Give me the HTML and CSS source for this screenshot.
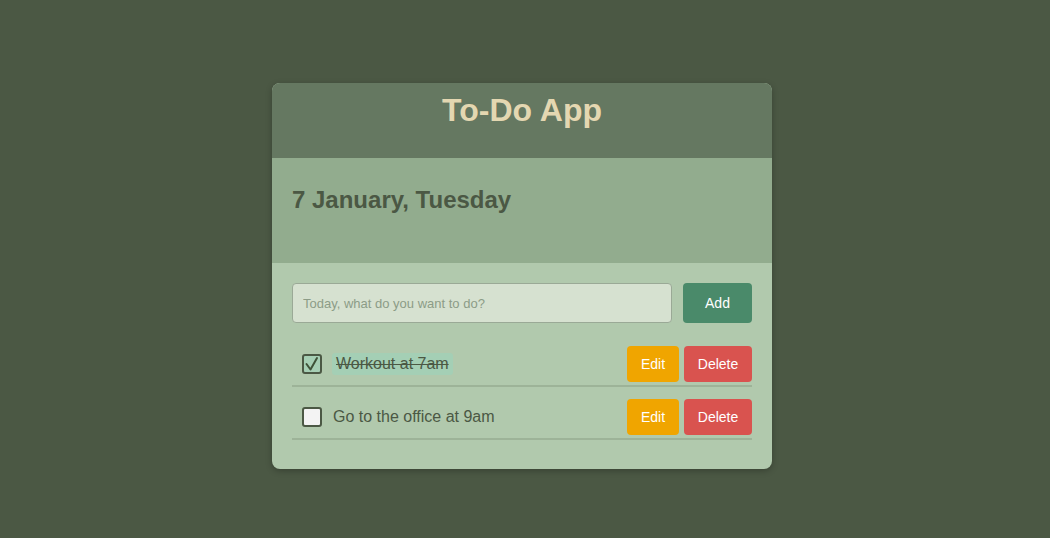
FILE: index.html
```html
<!DOCTYPE html>
<html lang="en">
<head>
<meta charset="utf-8">
<title>To-Do App</title>
<link rel="stylesheet" href="styles.css">
</head>
<body>
<div class="app">
  <header class="app-header">
    <h1 class="title">To-Do App</h1>
  </header>
  <section class="date-bar">
    <h2 class="date">7 January, Tuesday</h2>
  </section>
  <main class="content">
    <form class="add-form">
      <input class="task-input" type="text" placeholder="Today, what do you want to do?">
      <button class="btn btn-add" type="button">Add</button>
    </form>
    <ul class="task-list">
      <li class="task">
        <span class="check checked"><svg viewBox="0 0 16 16" width="16" height="16"><polyline points="2.5,8 6.5,13.5 13,2" fill="none" stroke="#3f5238" stroke-width="2" stroke-linecap="round" stroke-linejoin="round"/></svg></span>
        <span class="task-text done">Workout at 7am</span>
        <span class="actions">
          <button class="btn btn-edit" type="button">Edit</button>
          <button class="btn btn-delete" type="button">Delete</button>
        </span>
      </li>
      <li class="task">
        <span class="check"></span>
        <span class="task-text">Go to the office at 9am</span>
        <span class="actions">
          <button class="btn btn-edit" type="button">Edit</button>
          <button class="btn btn-delete" type="button">Delete</button>
        </span>
      </li>
    </ul>
  </main>
</div>
</body>
</html>
```
FILE: styles.css
```css
* { box-sizing: border-box; }
html, body { margin: 0; padding: 0; }
body {
  background: #4b5844;
  font-family: "Liberation Sans", Arial, sans-serif;
  height: 538px;
  overflow: hidden;
}
.app {
  width: 500px;
  margin: 83px 0 0 272px;
  border-radius: 8px;
  overflow: hidden;
  background: #b1c9ad;
  box-shadow: 0 2px 6px rgba(0,0,0,0.25);
}
.app-header {
  background: #657861;
  height: 75px;
  padding-top: 9px;
  text-align: center;
}
.title {
  margin: 0;
  font-size: 32px;
  font-weight: bold;
  color: #e4d7b1;
  line-height: 37px;
}
.date-bar {
  background: #92ac8e;
  height: 105px;
  padding: 28px 20px 0;
}
.date {
  margin: 0;
  font-size: 24px;
  font-weight: bold;
  color: #4b5844;
  line-height: 28px;
}
.content {
  padding: 20px 20px 29px;
}
.add-form {
  display: flex;
  gap: 11px;
  margin: 0 0 23px;
}
.task-input {
  flex: 1;
  height: 40px;
  border: 1px solid #9aa996;
  border-radius: 4px;
  background: #d6e1d0;
  padding: 0 10px;
  font-family: "Liberation Sans", Arial, sans-serif;
  font-size: 13px;
  color: #4b5844;
  outline: none;
}
.task-input::placeholder { color: #8c9c87; }
.btn {
  border: none;
  border-radius: 4px;
  color: #ffffff;
  font-family: "Liberation Sans", Arial, sans-serif;
  font-size: 14px;
  height: 36px;
  padding: 0 14px;
  cursor: pointer;
}
.btn-add {
  background: #4a8a6a;
  height: 40px;
  width: 69px;
  padding: 0;
}
.btn-edit { background: #f0a500; width: 52px; padding: 0; }
.btn-delete { background: #d9534f; width: 68px; padding: 0; }
.task-list {
  list-style: none;
  margin: 0;
  padding: 0;
  display: flex;
  flex-direction: column;
  gap: 12px;
}
.task {
  display: flex;
  align-items: center;
  padding: 0 0 3px 10px;
  border-bottom: 2px solid #9db398;
}
.check {
  width: 20px;
  height: 20px;
  border: 2px solid #4b5844;
  border-radius: 3px;
  background: #f3f3f3;
  display: flex;
  align-items: center;
  justify-content: center;
  flex: none;
}
.check.checked { background: #a6cfb4; }
.task-text {
  margin-left: 11px;
  font-size: 16px;
  color: #4b5844;
  flex: 1;
}
.task-text.done {
  flex: none;
  margin-left: 10px;
  padding: 2px 4px;
  background: #a4cfb5;
  border-radius: 3px;
  text-decoration: line-through;
}
.actions {
  margin-left: auto;
  display: flex;
  gap: 5px;
}
```
